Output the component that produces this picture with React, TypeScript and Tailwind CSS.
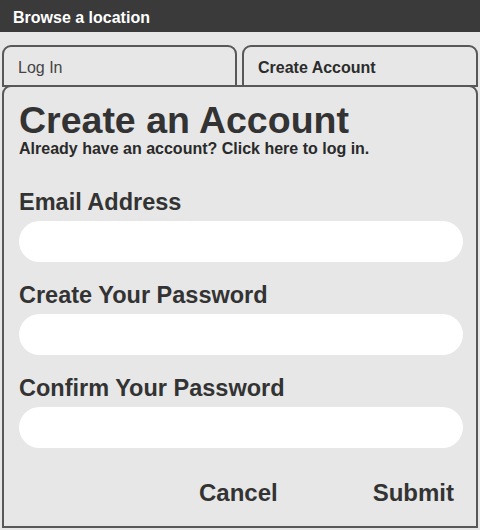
import React from "react";

export default function App() {
  const font = { fontFamily: '"Liberation Sans", Arial, sans-serif' };
  return (
    <div className="w-[480px] h-[530px] bg-[#e7e7e7] flex flex-col text-[#303030]" style={font}>
      <div className="h-[32px] bg-[#3a3a3a] flex items-center px-[13px] pt-[3px]">
        <span className="text-white font-bold text-[16px] leading-[20px]">Browse a location</span>
      </div>
      <div className="flex gap-[5px] px-[2px] mt-[13px]">
        <div className="w-[235px] h-[42px] border-2 border-[#585858] rounded-t-[9px] flex items-center pl-[14px] pt-[3px]">
          <span className="text-[16px] leading-[24px] text-[#444]">Log In</span>
        </div>
        <div className="flex-1 h-[42px] border-2 border-[#585858] rounded-t-[9px] flex items-center pl-[14px] pt-[3px]">
          <span className="text-[16px] leading-[24px] font-bold text-[#2c2c2c]">Create Account</span>
        </div>
      </div>
      <div className="flex-1 mx-[2px] mb-[2px] -mt-[2px] border-2 border-[#585858] rounded-t-[9px] px-[15px] pt-[15px] flex flex-col">
        <h1 className="text-[37.5px] leading-[37px] font-bold text-[#333]">Create an Account</h1>
        <p className="mt-[1px] text-[16px] leading-[18px] font-bold text-[#2a2a2a]">
          Already have an account? Click here to log in.
        </p>
        <label className="mt-[31px] text-[23.5px] leading-[26px] font-bold text-[#333]">Email Address</label>
        <input className="mt-[6px] h-[41px] w-[444px] rounded-full bg-white outline-none px-4" />
        <label className="mt-[20px] text-[23.5px] leading-[26px] font-bold text-[#333]">Create Your Password</label>
        <input type="password" className="mt-[6px] h-[41px] w-[444px] rounded-full bg-white outline-none px-4" />
        <label className="mt-[20px] text-[23.5px] leading-[26px] font-bold text-[#333]">Confirm Your Password</label>
        <input type="password" className="mt-[6px] h-[41px] w-[444px] rounded-full bg-white outline-none px-4" />
        <div className="mt-[31px] w-[444px] flex justify-end gap-[95px] pr-[9px]">
          <button className="text-[24px] leading-[28px] font-bold text-[#333]">Cancel</button>
          <button className="text-[24px] leading-[28px] font-bold text-[#333]">Submit</button>
        </div>
      </div>
    </div>
  );
}
